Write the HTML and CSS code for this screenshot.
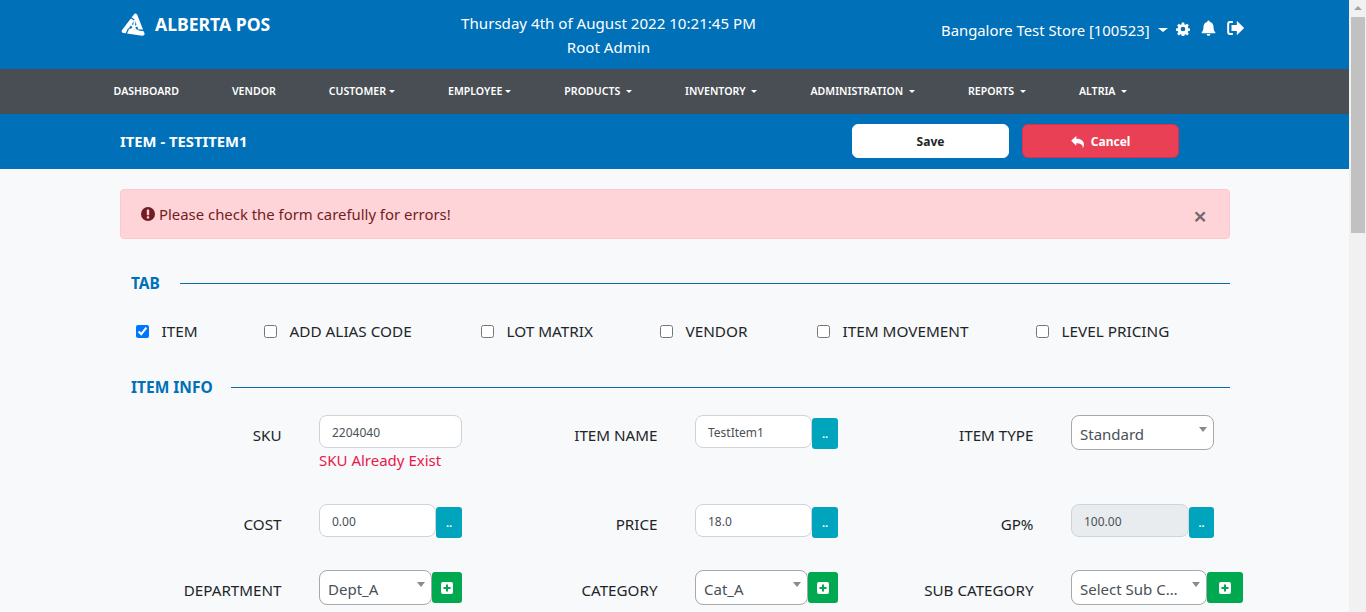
FILE: index.html
```html
<!DOCTYPE html>
<html lang="en">
  <head>
    <meta charset="utf-8" />
    <title>Alberta POS - Item</title>
    <link rel="stylesheet" href="styles.css">
  </head>
  <body>
    <div class="page">
      <header class="top-bar">
        <div class="brand">
          <svg class="brand-logo" viewBox="-13 -13 26 26">
            <g transform="rotate(8)">
              <path d="M0 -10.500L9.500 6.500H-9.500Z" fill="#fff" stroke="#fff" stroke-width="4" stroke-linejoin="round" />
              <path d="M0 -6L5 3.200H-5Z" fill="#0070b8" />
              <path d="M-3.500 -1.500L2.500 3.500M3.800 -1.800L-2 3.500M0 -6L0 1" stroke="#fff" stroke-width="1.800" fill="none" />
              <path d="M-0.500 -6L-6.500 -9M5 3.200L11 3M-5 3.200L-7 10" stroke="#0070b8" stroke-width="1.300" fill="none" />
            </g>
          </svg>
          <span>ALBERTA POS</span>
        </div>
        <div class="top-center">
          <div>Thursday 4th of August 2022 10:21:45 PM</div>
          <div>Root Admin</div>
        </div>
        <div class="top-right">
          <span>Bangalore Test Store [100523]</span>
          <span class="caret caret-store"></span>
          <svg class="top-icon icon-cog" viewBox="0 0 24 24" fill="#fff">
            <path fill-rule="evenodd" d="M10 1h4l.6 3.100 2 .8 2.600-1.800 2.800 2.800-1.800 2.600.8 2 3 .5v4l-3 .6-.8 2 1.800 2.600-2.800 2.800-2.600-1.800-2 .8-.6 3.100h-4l-.6-3.100-2-.8-2.600 1.800-2.800-2.800 1.800-2.600-.8-2-3-.6v-4l3-.5.8-2L2 5.900l2.800-2.800 2.600 1.800 2-.8zM12 8a4 4 0 1 0 0 8 4 4 0 0 0 0-8z" />
          </svg>
          <svg class="top-icon icon-bell" viewBox="0 0 24 24" fill="#fff">
            <path d="M12 0a2 2 0 0 1 2 2.200C18 3 20 6 20 10c0 5 1.500 7.500 3 9v1.500H1V19c1.500-1.500 3-4 3-9 0-4 2-7 6-7.800A2 2 0 0 1 12 0zM9 21.500h6a3 3 0 0 1-6 0z" />
          </svg>
          <svg class="top-icon icon-exit" viewBox="0 0 26 24" fill="#fff">
            <path d="M9 3H5a3 3 0 0 0-3 3v12a3 3 0 0 0 3 3h4" fill="none" stroke="#fff" stroke-width="3" />
            <path d="M15 1l11 11-11 11v-6.500H7v-9h8z" />
          </svg>
        </div>
      </header>

      <nav class="main-nav">
        <a>DASHBOARD</a>
        <a>VENDOR</a>
        <a>CUSTOMER<span class="caret"></span></a>
        <a>EMPLOYEE<span class="caret"></span></a>
        <a>PRODUCTS <span class="caret"></span></a>
        <a>INVENTORY <span class="caret"></span></a>
        <a>ADMINISTRATION <span class="caret"></span></a>
        <a>REPORTS <span class="caret"></span></a>
        <a>ALTRIA <span class="caret"></span></a>
      </nav>

      <div class="sub-bar">
        <div class="sub-title">ITEM - TESTITEM1</div>
        <div class="sub-actions">
          <button class="btn-save">Save</button>
          <button class="btn-cancel">
            <svg class="reply-icon" viewBox="0 0 16 14" fill="#fff">
              <path d="M0 5.500L6 0v3.300c5 0 9 2 9 7 0 1.500-.6 2.800-1.500 3.700.4-3.800-2.500-5.500-7.500-5.500V11.500z" />
            </svg>
            Cancel
          </button>
        </div>
      </div>

      <main class="content">
        <div class="alert">
          <svg class="alert-icon" viewBox="0 0 14 14">
            <circle cx="7" cy="7" r="7" fill="#721c24" />
            <rect x="5.800" y="2.500" width="2.400" height="5.700" rx="0.500" fill="#ffd4d8" />
            <rect x="5.800" y="9.200" width="2.400" height="2.300" rx="0.500" fill="#ffd4d8" />
          </svg>
          <span>Please check the form carefully for errors!</span>
          <span class="alert-close">×</span>
        </div>

        <div class="section-head">
          <span>TAB</span>
        </div>
        <div class="tab-row">
          <label class="tab-check"><input type="checkbox" checked />ITEM</label>
          <label class="tab-check"><input type="checkbox" />ADD ALIAS CODE</label>
          <label class="tab-check"><input type="checkbox" />LOT MATRIX</label>
          <label class="tab-check"><input type="checkbox" />VENDOR</label>
          <label class="tab-check"><input type="checkbox" />ITEM MOVEMENT</label>
          <label class="tab-check"><input type="checkbox" />LEVEL PRICING</label>
        </div>

        <div class="section-head section-info">
          <span>ITEM INFO</span>
        </div>

        <div class="form-row form-row-first">
          <div class="field">
            <label>SKU</label>
            <div class="control">
              <input class="text-input input-full" type="text" value="2204040" />
              <div class="field-error">SKU Already Exist</div>
            </div>
          </div>
          <div class="field">
            <label>ITEM NAME</label>
            <div class="control control-group">
              <input class="text-input input-narrow" type="text" value="TestItem1" />
              <button class="btn-dots">..</button>
            </div>
          </div>
          <div class="field">
            <label>ITEM TYPE</label>
            <div class="control">
              <div class="select-wrap select-full"><select><option>Standard</option></select></div>
            </div>
          </div>
        </div>

        <div class="form-row form-row-second">
          <div class="field">
            <label>COST</label>
            <div class="control control-group">
              <input class="text-input input-narrow" type="text" value="0.00" />
              <button class="btn-dots">..</button>
            </div>
          </div>
          <div class="field">
            <label>PRICE</label>
            <div class="control control-group">
              <input class="text-input input-narrow" type="text" value="18.0" />
              <button class="btn-dots">..</button>
            </div>
          </div>
          <div class="field">
            <label>GP%</label>
            <div class="control control-group">
              <input class="text-input input-narrow input-gp" type="text" value="100.00" disabled />
              <button class="btn-dots">..</button>
            </div>
          </div>
        </div>

        <div class="form-row">
          <div class="field">
            <label>DEPARTMENT</label>
            <div class="control control-group">
              <div class="select-wrap select-short"><select><option>Dept_A</option></select></div>
              <button class="btn-add"><svg viewBox="0 0 12 12"><rect width="12" height="12" rx="2" fill="#fff" /><path d="M6 2.500v7M2.500 6h7" stroke="#00a84f" stroke-width="2" /></svg></button>
            </div>
          </div>
          <div class="field">
            <label>CATEGORY</label>
            <div class="control control-group">
              <div class="select-wrap select-short"><select><option>Cat_A</option></select></div>
              <button class="btn-add"><svg viewBox="0 0 12 12"><rect width="12" height="12" rx="2" fill="#fff" /><path d="M6 2.500v7M2.500 6h7" stroke="#00a84f" stroke-width="2" /></svg></button>
            </div>
          </div>
          <div class="field">
            <label>SUB CATEGORY</label>
            <div class="control control-group">
              <div class="select-wrap select-sub"><select><option>Select Sub Category</option></select></div>
              <button class="btn-add"><svg viewBox="0 0 12 12"><rect width="12" height="12" rx="2" fill="#fff" /><path d="M6 2.500v7M2.500 6h7" stroke="#00a84f" stroke-width="2" /></svg></button>
            </div>
          </div>
        </div>
      </main>
    </div>

    <div class="scrollbar">
      <div class="scroll-arrow"></div>
      <div class="scroll-thumb"></div>
    </div>
  </body>
</html>
```

FILE: styles.css
```css
html,
body {
  height: 100%;
}

body {
  margin: 0;
  display: flex;
  overflow: hidden;
  background-color: #f8f9fa;
  color: #212529;
  font-family: "Noto Sans", "Open Sans", sans-serif;
  font-size: 15px;
}

.page {
  flex: 1;
  min-width: 0;
  height: 612px;
  overflow: hidden;
}

/* top bar */

.top-bar {
  height: 69px;
  box-sizing: border-box;
  background-color: #0070b8;
  color: #fff;
  display: flex;
  padding-left: 121px;
}

.brand {
  width: 250px;
  height: 48px;
  display: flex;
  align-items: center;
  font-size: 17.6px;
  font-weight: 700;
}

.brand-logo {
  width: 26px;
  height: 26px;
  margin-right: 8px;
  margin-top: 4px;
}

.top-center {
  width: 475px;
  padding-top: 11px;
  text-align: center;
  font-size: 15.1px;
  line-height: 24px;
}

.top-right {
  margin-left: 95px;
  height: 60px;
  display: flex;
  align-items: center;
  font-size: 14.85px;
  white-space: nowrap;
}

.caret {
  display: inline-block;
  width: 0;
  height: 0;
  margin-left: 3px;
  vertical-align: 2px;
  border-top: 3px solid #fff;
  border-left: 3px solid transparent;
  border-right: 3px solid transparent;
}

.caret-store {
  margin-left: 8px;
  border-top-width: 4px;
  border-left-width: 5px;
  border-right-width: 5px;
}

.top-icon {
  flex: none;
}

.icon-cog {
  width: 14px;
  height: 14px;
  margin: -3px 0 0 8px;
}

.icon-bell {
  width: 15px;
  height: 16px;
  margin: -4px 0 0 11px;
}

.icon-exit {
  width: 19px;
  height: 16px;
  margin: -5px 0 0 10px;
}

/* nav */

.main-nav {
  height: 45px;
  box-sizing: border-box;
  padding: 0 0 1px 113.6px;
  background-color: #484e54;
  display: flex;
  align-items: center;
  gap: 53px;
}

.main-nav a {
  color: #fff;
  font-size: 10.6px;
  font-weight: 600;
  white-space: nowrap;
}

/* sub bar */

.sub-bar {
  height: 55px;
  background-color: #0070b8;
  display: flex;
  align-items: center;
  padding-left: 120px;
}

.sub-title {
  width: 732px;
  padding-bottom: 2px;
  color: #fff;
  font-size: 14.8px;
  font-weight: 700;
}

.sub-actions {
  display: flex;
  gap: 13px;
  margin-top: -1px;
}

.sub-actions button {
  width: 157px;
  height: 34px;
  border-radius: 6px;
  font-family: inherit;
  font-size: 12px;
  font-weight: 700;
}

.btn-save {
  background-color: #fff;
  border: 1px solid #fff;
  color: #212529;
}

.btn-cancel {
  background-color: #ea4056;
  border: 1px solid #dc3050;
  color: #fff;
}

.reply-icon {
  width: 14px;
  height: 12px;
  margin-right: 3px;
  vertical-align: -2px;
}

/* content */

.content {
  width: 1110px;
  margin-left: 120px;
  padding-top: 20px;
}

.alert {
  height: 50px;
  box-sizing: border-box;
  display: flex;
  align-items: center;
  padding: 0 20px;
  background-color: #ffd4d8;
  border: 1px solid #ffc6cc;
  border-radius: 4px;
  color: #721c24;
  font-size: 14.9px;
}

.alert-icon {
  width: 14px;
  height: 14px;
  margin-right: 4px;
}

.alert-close {
  margin-left: auto;
  color: #6f6a6b;
  font-size: 24px;
  font-weight: 600;
  line-height: 1;
  padding: 3px 2px 0 0;
}

.section-head {
  display: flex;
  align-items: center;
  height: 22px;
  margin-top: 33px;
  padding-left: 11px;
  color: #0070b8;
  font-size: 15.5px;
  font-weight: 700;
}

.section-head span {
  width: 49px;
  white-space: nowrap;
}

.section-head::after {
  content: "";
  flex: 1;
  height: 1px;
  background-color: #0b6aa8;
}

.section-info {
  margin-top: 33px;
}

.section-info span {
  width: 100px;
}

.tab-row {
  display: grid;
  grid-template-columns: 128px 217px 179px 157px 219px auto;
  margin-top: 25px;
  padding-left: 16px;
}

.tab-check {
  display: flex;
  align-items: center;
  height: 24px;
  font-size: 15.3px;
  white-space: nowrap;
}

.tab-check input {
  width: 13px;
  height: 13px;
  margin: 0 12.5px 0 0;
}

/* form grid */

.form-row {
  display: grid;
  grid-template-columns: repeat(3, 376px);
}

.form-row-first {
  height: 89px;
  margin-top: 17px;
}

.form-row-second {
  height: 66px;
}

.field {
  display: grid;
  grid-template-columns: 161.5px 172px;
  column-gap: 37.5px;
  align-items: start;
}

.field label {
  padding-top: 10px;
  text-align: right;
  font-size: 15.2px;
  white-space: nowrap;
}

.control-group {
  display: flex;
  align-items: center;
  height: 35px;
}

.text-input {
  height: 33px;
  box-sizing: border-box;
  padding: 1px 12px 0;
  background-color: #fff;
  border: 1px solid #ced4da;
  border-radius: 8px;
  color: #495057;
  font-family: inherit;
  font-size: 12px;
}

.text-input:disabled {
  background-color: #e9ecef;
}

.input-full {
  width: 143px;
}

.input-narrow {
  width: 117px;
  margin-top: -2px;
}

.input-gp {
  width: 118px;
}

.field-error {
  margin-top: 2px;
  color: #e8184e;
  font-size: 15px;
}

.btn-dots {
  width: 26px;
  height: 31px;
  margin-top: 2px;
  padding: 0;
  background-color: #00a5bd;
  border: 0;
  border-radius: 3px;
  color: #fff;
  font-family: inherit;
  font-size: 11px;
  font-weight: 700;
}

.input-gp + .btn-dots {
  width: 25px;
}

.select-wrap {
  position: relative;
  height: 35px;
}

.select-wrap select {
  width: 100%;
  height: 100%;
  box-sizing: border-box;
  padding: 2px 24px 0 8px;
  appearance: none;
  background-color: #fff;
  border: 1px solid #a8a8a8;
  border-radius: 8px;
  color: #495057;
  font-family: inherit;
  font-size: 15px;
  text-overflow: ellipsis;
}

/* select arrow drawn over the box */
.select-wrap::after {
  content: "";
  position: absolute;
  top: 12px;
  right: 7px;
  border-top: 5px solid #8a8a8a;
  border-left: 4px solid transparent;
  border-right: 4px solid transparent;
}

.select-full {
  width: 143px;
}

.select-short {
  width: 113px;
}

.select-sub {
  width: 136px;
}

.btn-add {
  flex: none;
  width: 30px;
  height: 31px;
  padding: 0;
  display: flex;
  align-items: center;
  justify-content: center;
  background-color: #00a84f;
  border: 0;
  border-radius: 3px;
}

.btn-add svg {
  width: 12px;
  height: 12px;
}

.select-sub + .btn-add {
  width: 36px;
}

/* scrollbar */

.scrollbar {
  flex: none;
  width: 17px;
  height: 612px;
  background-color: #f1f1f1;
}

.scroll-arrow {
  width: 0;
  margin: 6px auto 0;
  border-bottom: 4px solid #a3a3a3;
  border-left: 4px solid transparent;
  border-right: 4px solid transparent;
}

.scroll-thumb {
  height: 216px;
  margin: 7px 1px 0 2px;
  background-color: #c1c1c1;
}
```
